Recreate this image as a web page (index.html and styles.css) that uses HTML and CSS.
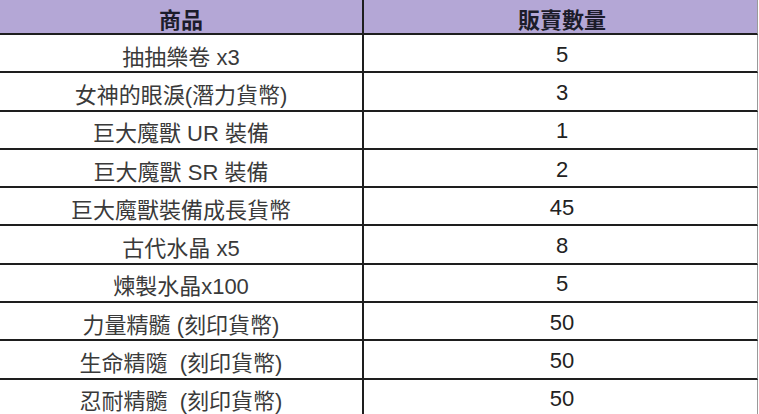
FILE: index.html
```html
<!DOCTYPE html>
<html lang="zh-Hant">
<head>
<meta charset="utf-8">
<title>販賣數量</title>
<link rel="stylesheet" href="styles.css">
</head>
<body>
<div class="sheet">
  <div class="cell head left">商品</div>
  <div class="cell head right">販賣數量</div>

  <div class="cell left">抽抽樂卷 x3</div>
  <div class="cell right">5</div>

  <div class="cell left">女神的眼淚(潛力貨幣)</div>
  <div class="cell right">3</div>

  <div class="cell left">巨大魔獸 UR 裝備</div>
  <div class="cell right">1</div>

  <div class="cell left">巨大魔獸 SR 裝備</div>
  <div class="cell right">2</div>

  <div class="cell left">巨大魔獸裝備成長貨幣</div>
  <div class="cell right">45</div>

  <div class="cell left">古代水晶 x5</div>
  <div class="cell right">8</div>

  <div class="cell left">煉製水晶x100</div>
  <div class="cell right">5</div>

  <div class="cell left">力量精髓 (刻印貨幣)</div>
  <div class="cell right">50</div>

  <div class="cell left">生命精隨&nbsp; (刻印貨幣)</div>
  <div class="cell right">50</div>

  <div class="cell left">忍耐精髓&nbsp; (刻印貨幣)</div>
  <div class="cell right">50</div>
</div>
</body>
</html>
```

FILE: styles.css
```css
html, body {
  margin: 0;
  padding: 0;
  background: #ffffff;
}

.sheet {
  display: grid;
  grid-template-columns: 364px 394px;
  grid-template-rows: 35px;
  grid-auto-rows: 38.3px;
  width: 758px;
  font-family: "Liberation Sans", "Noto Sans CJK TC", sans-serif;
  font-size: 22px;
  color: #3a3a3a;
}

.cell {
  box-sizing: border-box;
  display: flex;
  align-items: center;
  justify-content: center;
  padding-top: 3px;
  border-bottom: 2px solid #1e1e1e;
  white-space: pre;
}

.left {
  border-right: 2px solid #1e1e1e;
}

.right {
  border-right: 1px solid #9a9a9a;
  color: #222222;
  padding-left: 3px;
}

.head {
  background: #b4a7d6;
  font-weight: bold;
  color: #1c1c2a;
  font-size: 22px;
}
```
